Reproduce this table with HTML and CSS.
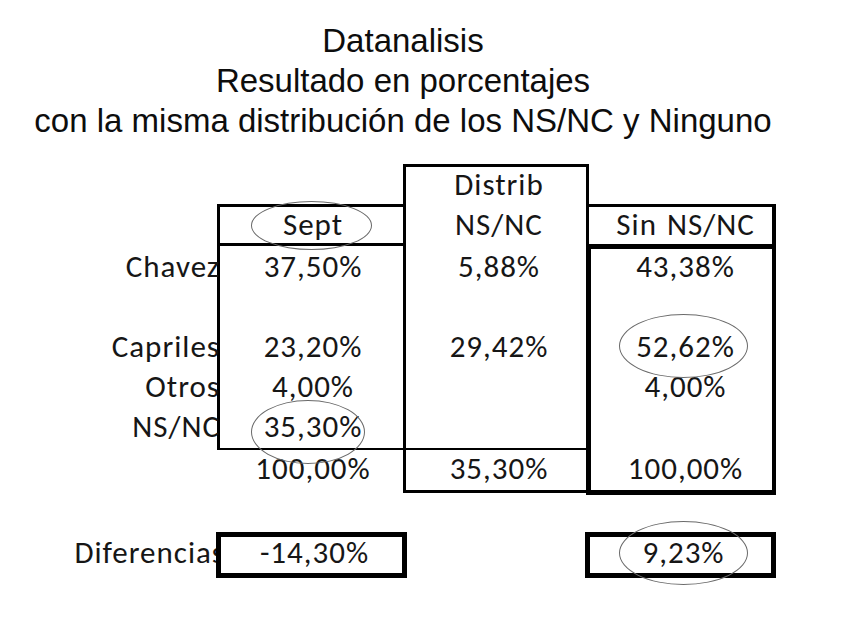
FILE: index.html
```html
<!DOCTYPE html>
<html lang="es">
<head>
<meta charset="utf-8">
<title>Datanalisis</title>
<link rel="stylesheet" href="styles.css">
</head>
<body>
<main class="slide">
  <header class="title">
    <div>Datanalisis</div>
    <div>Resultado en porcentajes</div>
    <div>con la misma distribución de los NS/NC y Ninguno</div>
  </header>

  <section class="table">
    <div class="f-distrib"></div>
    <div class="f-sept"></div>
    <div class="f-sept-head"></div>
    <div class="f-total-line"></div>
    <div class="f-sin-head"></div>
    <div class="f-sin-body"></div>

    <div class="c col3 r1">Distrib</div>
    <div class="c col2 r2 mark"><span class="oval oval-sept"></span>Sept</div>
    <div class="c col3 r2">NS/NC</div>
    <div class="c col4 r2 wide">Sin NS/NC</div>

    <div class="lbl r3">Chavez</div>
    <div class="c col2 r3">37,50%</div>
    <div class="c col3 r3">5,88%</div>
    <div class="c col4 r3">43,38%</div>

    <div class="lbl r5">Capriles</div>
    <div class="c col2 r5">23,20%</div>
    <div class="c col3 r5">29,42%</div>
    <div class="c col4 r5 mark"><span class="oval oval-capriles"></span>52,62%</div>

    <div class="lbl r6">Otros</div>
    <div class="c col2 r6">4,00%</div>
    <div class="c col4 r6">4,00%</div>

    <div class="lbl r7">NS/NC</div>
    <div class="c col2 r7 mark"><span class="oval oval-nsnc"></span>35,30%</div>

    <div class="c col2 r8">100,00%</div>
    <div class="c col3 r8">35,30%</div>
    <div class="c col4 r8">100,00%</div>

    <div class="lbl dif-lbl">Diferencias</div>
    <div class="dif dif-left">-14,30%</div>
    <div class="dif dif-right"><span class="oval oval-dif"></span>9,23%</div>
  </section>
</main>
</body>
</html>
```

FILE: styles.css
```css
html, body {
  margin: 0;
  padding: 0;
  background: #ffffff;
}

.slide {
  width: 843px;
  height: 628px;
  color: #111111;
}

.title {
  width: 806px;
  padding-top: 21px;
  text-align: center;
  font-family: "Liberation Sans", Arial, sans-serif;
  font-size: 33px;
  line-height: 40px;
  color: #0d0d0d;
}

.table {
  margin-top: 23px;
  display: grid;
  grid-template-columns: 217px 186px 186px 187px;
  grid-template-rows: 40px 42px 40px 40px 40px 40px 42px 42px 42px 46px;
  font-family: Carlito, Lato, "Open Sans", sans-serif;
  font-size: 31px;
  letter-spacing: 1px;
  color: #161616;
}

/* frames (borders) */
.f-distrib {
  grid-column: 3;
  grid-row: 1 / 9;
  border: 3px solid #000;
  margin-bottom: -3px;
}
.f-sept {
  grid-column: 2;
  grid-row: 2 / 8;
  border-top: 3px solid #000;
  border-left: 3px solid #000;
}
.f-sept-head {
  grid-column: 2;
  grid-row: 2;
  border-bottom: 3px solid #000;
}
.f-total-line {
  grid-column: 2 / 4;
  grid-row: 8;
  border-top: 2px solid #000;
}
.f-sin-head {
  grid-column: 4;
  grid-row: 2;
  border-top: 3px solid #000;
  border-right: 4px solid #000;
}
.f-sin-body {
  grid-column: 4;
  grid-row: 3 / 9;
  border: 5px solid #000;
  border-right-width: 4px;
  margin: -2px 0 -5px -3px;
}

/* cells */
.c {
  text-align: center;
  line-height: 40px;
  padding-left: 6px;
  white-space: nowrap;
}
.lbl {
  grid-column: 1;
  text-align: right;
  line-height: 40px;
  margin-right: -3px;
  white-space: nowrap;
}
.wide { word-spacing: 2px; }

.col2 { grid-column: 2; }
.col3 { grid-column: 3; }
.col4 { grid-column: 4; }
.r1 { grid-row: 1; }
.r2 { grid-row: 2; }
.r3 { grid-row: 3; }
.r5 { grid-row: 5; }
.r6 { grid-row: 6; }
.r7 { grid-row: 7; }
.r8 { grid-row: 8; }

.dif-lbl {
  grid-row: 10;
  padding-top: 5px;
  line-height: 30px;
  margin-right: -8px;
}
.dif {
  grid-row: 10;
  border: 5px solid #000;
  background: #ffffff;
  text-align: center;
  line-height: 30px;
  padding-left: 6px;
  position: relative;
}
.dif-left {
  grid-column: 2;
  margin: 0 -4px 0 -1px;
}
.dif-right {
  grid-column: 4;
  margin-left: -4px;
}

/* hand-drawn ovals that sit over the numbers */
.mark { position: relative; }
.oval {
  position: absolute;
  border: 1px solid #6a6a6a;
  border-radius: 50%;
  box-sizing: border-box;
}
.oval-sept { left: 34px; top: -3px; width: 121px; height: 49px; }
.oval-nsnc { left: 34px; top: -6px; width: 114px; height: 64px; }
.oval-capriles { left: 30px; top: -12px; width: 129px; height: 64px; }
.oval-dif { left: 29px; top: -16px; width: 129px; height: 64px; }
```
